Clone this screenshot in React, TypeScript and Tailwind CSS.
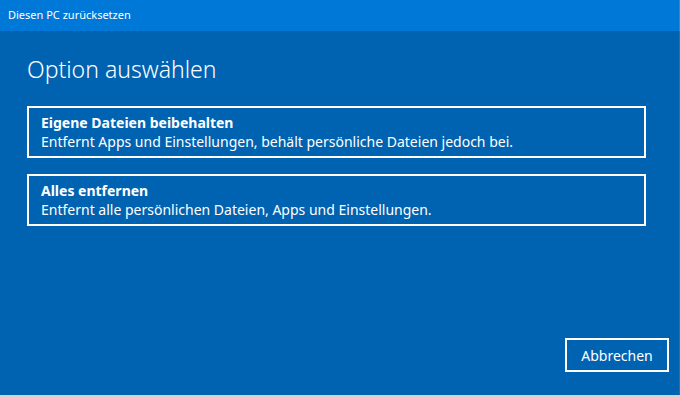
import React from 'react';

const options = [
  {
    title: 'Eigene Dateien beibehalten',
    text: 'Entfernt Apps und Einstellungen, behält persönliche Dateien jedoch bei.',
  },
  {
    title: 'Alles entfernen',
    text: 'Entfernt alle persönlichen Dateien, Apps und Einstellungen.',
  },
];

const App: React.FC = () => {
  return (
    <div
      className="flex h-[398px] w-[680px] flex-col bg-[#d4d4d4] text-white"
      style={{ fontFamily: '"Noto Sans", "Open Sans", sans-serif' }}
    >
      <div className="flex h-[31px] items-center border-r border-[#2b8ae0] bg-[#0078d7] pl-2 text-[11px]">
        Diesen PC zurücksetzen
      </div>

      <div className="flex h-[364px] flex-col border-r border-[#1a74bd] bg-[#0063b1] pl-[27px] pr-[33px]">
        <h1 className="mt-[23px] text-[23px] font-light leading-[31px]">Option auswählen</h1>

        <div className="mt-[21px] flex flex-col gap-[16px]">
          {options.map((o) => (
            <button
              key={o.title}
              className="flex h-[52px] flex-col justify-center border-2 border-white px-3 text-left"
            >
              <span className="text-[14px] font-bold leading-[19px]">{o.title}</span>
              <span className="text-[14px] leading-[20px]">{o.text}</span>
            </button>
          ))}
        </div>

        <div className="mt-auto mb-[23px] flex justify-end">
          <button className="-mr-[23px] h-[34px] w-[104px] border-2 border-white text-[14px]">
            Abbrechen
          </button>
        </div>
      </div>
    </div>
  );
};

export default App;
